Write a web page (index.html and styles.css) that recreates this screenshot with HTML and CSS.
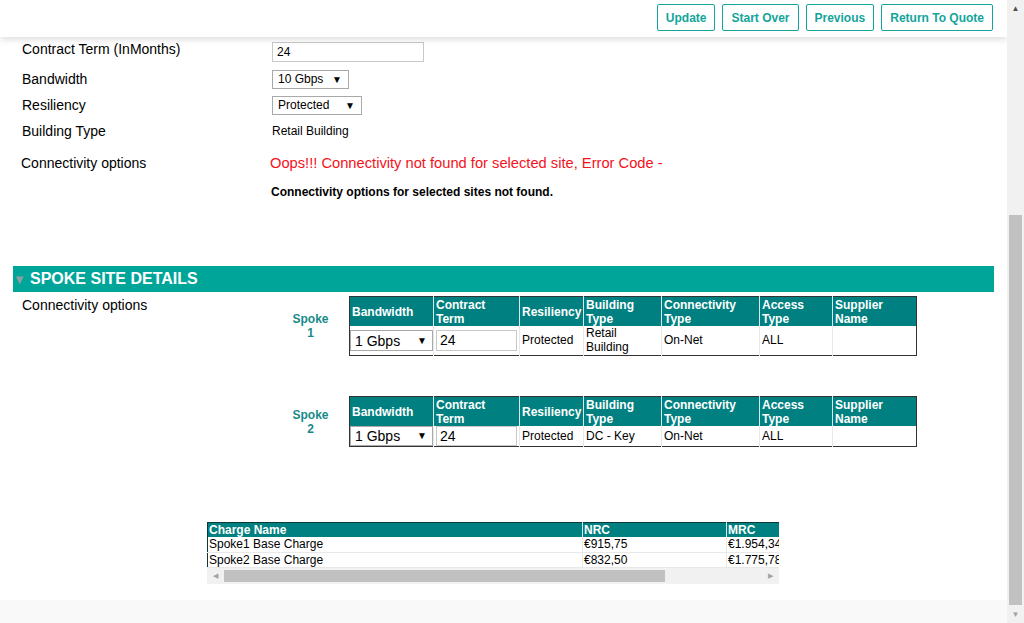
FILE: index.html
```html
<!DOCTYPE html>
<html>
<head>
<meta charset="utf-8">
<link rel="stylesheet" href="styles.css">
</head>
<body>
<div class="window">
  <div class="page">
    <div class="topbar">
      <button class="btn">Update</button>
      <button class="btn">Start Over</button>
      <button class="btn">Previous</button>
      <button class="btn">Return To Quote</button>
    </div>

    <div class="form">
      <div class="row first"><div class="label">Contract Term (InMonths)</div><div class="input w152">24</div></div>
      <div class="row"><div class="label">Bandwidth</div><div class="sel w77"><span>10 Gbps</span><span class="arr">▼</span></div></div>
      <div class="row"><div class="label">Resiliency</div><div class="sel w90"><span>Protected</span><span class="arr">▼</span></div></div>
      <div class="row"><div class="label">Building Type</div><div class="value">Retail Building</div></div>
      <div class="row conn"><div class="label lbl-conn">Connectivity options</div><div class="error">Oops!!! Connectivity not found for selected site, Error Code -</div></div>
      <div class="row notfound"><div class="label"></div><div class="bold">Connectivity options for selected sites not found.</div></div>
    </div>

    <div class="section"><span class="tri">▼</span><span>SPOKE SITE DETAILS</span></div>

    <div class="spokes">
      <div class="label sp-label">Connectivity options</div>
      <div class="spoke-list">
        <div class="spoke">
          <div class="spoke-name">Spoke<br>1</div>
          <table class="grid">
            <colgroup><col style="width:84px"><col style="width:86px"><col style="width:64px"><col style="width:78px"><col style="width:98px"><col style="width:73px"><col style="width:84px"></colgroup>
            <tr class="hd"><th>Bandwidth</th><th>Contract<br>Term</th><th>Resiliency</th><th>Building<br>Type</th><th>Connectivity<br>Type</th><th>Access<br>Type</th><th>Supplier<br>Name</th></tr>
            <tr class="dr tall"><td><div class="sel tsel"><span>1 Gbps</span><span class="arr">▼</span></div></td><td><div class="input tin">24</div></td><td>Protected</td><td>Retail<br>Building</td><td>On-Net</td><td>ALL</td><td></td></tr>
          </table>
        </div>
        <div class="spoke">
          <div class="spoke-name">Spoke<br>2</div>
          <table class="grid">
            <colgroup><col style="width:84px"><col style="width:86px"><col style="width:64px"><col style="width:78px"><col style="width:98px"><col style="width:73px"><col style="width:84px"></colgroup>
            <tr class="hd"><th>Bandwidth</th><th>Contract<br>Term</th><th>Resiliency</th><th>Building<br>Type</th><th>Connectivity<br>Type</th><th>Access<br>Type</th><th>Supplier<br>Name</th></tr>
            <tr class="dr short"><td><div class="sel tsel"><span>1 Gbps</span><span class="arr">▼</span></div></td><td><div class="input tin">24</div></td><td>Protected</td><td>DC - Key</td><td>On-Net</td><td>ALL</td><td></td></tr>
          </table>
        </div>
      </div>
    </div>

    <div class="charges">
      <div class="charges-view">
        <table class="ctable">
          <colgroup><col style="width:375px"><col style="width:144px"><col style="width:190px"></colgroup>
          <tr class="chd"><th>Charge Name</th><th>NRC</th><th>MRC</th></tr>
          <tr><td>Spoke1 Base Charge</td><td>€915,75</td><td>€1.954,34</td></tr>
          <tr><td>Spoke2 Base Charge</td><td>€832,50</td><td>€1.775,78</td></tr>
        </table>
      </div>
      <div class="hscroll">
        <span class="harr">◀</span>
        <div class="hthumb-track"><div class="hthumb"></div></div>
        <span class="harr">▶</span>
      </div>
    </div>

    <div class="spacer"></div>
    <div class="footer"></div>
  </div>
  <div class="vscroll">
    <span class="varr up">▲</span>
    <div class="vtrack"><div class="vthumb"></div></div>
    <span class="varr down">▼</span>
  </div>
</div>
</body>
</html>
```

FILE: styles.css
```css
* { box-sizing: border-box; }
html, body { margin: 0; padding: 0; }
body {
  font-family: "Liberation Sans", Arial, sans-serif;
  color: #000;
  background: #fff;
  overflow: hidden;
}
.window {
  display: flex;
  width: 1024px;
  height: 623px;
}
.page {
  width: 1007px;
  height: 623px;
  display: flex;
  flex-direction: column;
  overflow: hidden;
}
.topbar {
  height: 37px;
  flex: none;
  display: flex;
  justify-content: flex-end;
  align-items: flex-start;
  gap: 7px;
  padding: 4px 14px 0 0;
  background: #fff;
  box-shadow: 0 3px 6px rgba(0,0,0,0.12);
  position: relative;
  z-index: 2;
}
.btn {
  height: 27px;
  padding: 0 8px;
  border: 1px solid #13a59b;
  border-radius: 2px;
  background: #fff;
  color: #13a59b;
  font-family: "Liberation Sans", Arial, sans-serif;
  font-weight: bold;
  font-size: 12px;
}
.form {
  padding: 0 0 0 22px;
}
.row {
  display: flex;
  align-items: center;
  height: 26px;
}
.row.first {
  height: 29px;
  align-items: flex-start;
}
.row.first .label { line-height: 16px; margin-top: 4px; }
.row.first .input { margin-top: 5px; }
.label {
  width: 250px;
  flex: none;
  font-size: 14px;
}
.input {
  height: 20px;
  border: 1px solid #c8c8c8;
  font-size: 12px;
  line-height: 18px;
  padding: 0 4px;
  background: #fff;
}
.w152 { width: 152px; }
.sel {
  display: flex;
  justify-content: space-between;
  align-items: center;
  height: 19px;
  border: 1px solid #a9a9a9;
  font-size: 12px;
  padding: 0 6px 0 5px;
  background: #fff;
}
.w77 { width: 77px; }
.w90 { width: 90px; }
.arr { font-size: 10px; }
.value { font-size: 12px; }
.conn { margin-top: 6px; }
.lbl-conn { margin-left: -1px; width: 250px; }
.error {
  color: #f4121c;
  font-size: 14.7px;
  margin-left: -1px;
}
.notfound { height: 18px; margin-top: 7px; }
.bold { font-weight: bold; font-size: 12px; margin-left: -1px; }
.section {
  margin: 65px 13px 0 13px;
  height: 26px;
  background: #00a59a;
  display: flex;
  align-items: center;
  color: #fff;
  font-weight: bold;
  font-size: 16px;
  flex: none;
}
.tri {
  color: #8f9f9d;
  font-size: 13px;
  width: 17px;
}
.spokes {
  display: flex;
  padding-left: 22px;
  margin-top: 4px;
}
.sp-label { padding-top: 1px; }
.spoke-list { display: flex; flex-direction: column; gap: 40px; }
.spoke { display: flex; align-items: center; }
.spoke-name {
  width: 77px;
  text-align: center;
  color: #178a88;
  font-weight: bold;
  font-size: 12px;
  line-height: 14px;
  padding-top: 1px;
}
.grid {
  border-collapse: collapse;
  table-layout: fixed;
  width: 568px;
  border: 1px solid #333;
  font-size: 12px;
}
.grid th, .grid td {
  padding: 0 2px;
  text-align: left;
  vertical-align: middle;
  line-height: 14px;
}
.grid .hd th {
  background: #008080;
  color: #fff;
  font-weight: bold;
  height: 29px;
  border-left: 1px solid #d8eaea;
  padding-top: 1px;
}
.grid .hd th:first-child { border-left: none; }
.grid .dr td {
  border-left: 1px solid #e8e8e8;
}
.grid .dr td:first-child { border-left: none; padding: 1px 0 0 0; }
.grid .dr.tall td { height: 29px; }
.grid .dr.short td { height: 20px; }
.grid .dr.short td:first-child { padding: 0; }
.tsel {
  width: 83px;
  height: 21px;
  font-size: 14px;
  padding: 0 5px 0 4px;
}
.tin {
  width: 81px;
  height: 21px;
  font-size: 14px;
  line-height: 19px;
  padding: 0 3px;
}
.short .tsel, .short .tin { height: 20px; line-height: 18px; }
.charges {
  margin: 75px 0 0 207px;
  width: 572px;
  flex: none;
}
.charges-view {
  overflow: hidden;
  width: 572px;
}
.ctable {
  border-collapse: collapse;
  table-layout: fixed;
  width: 709px;
  font-size: 12px;
  border: 1px solid #0c3a38;
}
.ctable th, .ctable td {
  text-align: left;
  padding: 0 1px;
  height: 15px;
  line-height: 14px;
}
.ctable .chd th {
  background: #008080;
  color: #fff;
  font-weight: bold;
  border-left: 1px solid #d8eaea;
}
.ctable .chd th:first-child { border-left: none; }
.ctable td {
  border-left: 1px solid #e8e8e8;
  border-bottom: 1px solid #e8e8e8;
}
.ctable td:first-child { border-left: none; }
.hscroll {
  height: 16px;
  background: #f1f1f1;
  display: flex;
  align-items: center;
}
.harr {
  width: 17px;
  font-size: 7px;
  color: #a3a3a3;
  text-align: center;
}
.hthumb-track { flex: 1; height: 100%; display: flex; align-items: center; }
.hthumb { width: 441px; height: 12px; background: #c1c1c1; }
.spacer { height: 16px; flex: none; }
.footer { flex: 1; background: #f9f9f9; }
.vscroll {
  width: 17px;
  height: 623px;
  background: #f1f1f1;
  display: flex;
  flex-direction: column;
  align-items: center;
}
.varr {
  height: 17px;
  font-size: 8px;
  line-height: 17px;
  color: #505050;
}
.varr.down { color: #a3a3a3; }
.vtrack { flex: 1; width: 100%; padding: 198px 2px 1px 2px; }
.vthumb { height: 100%; background: #c1c1c1; }
```
